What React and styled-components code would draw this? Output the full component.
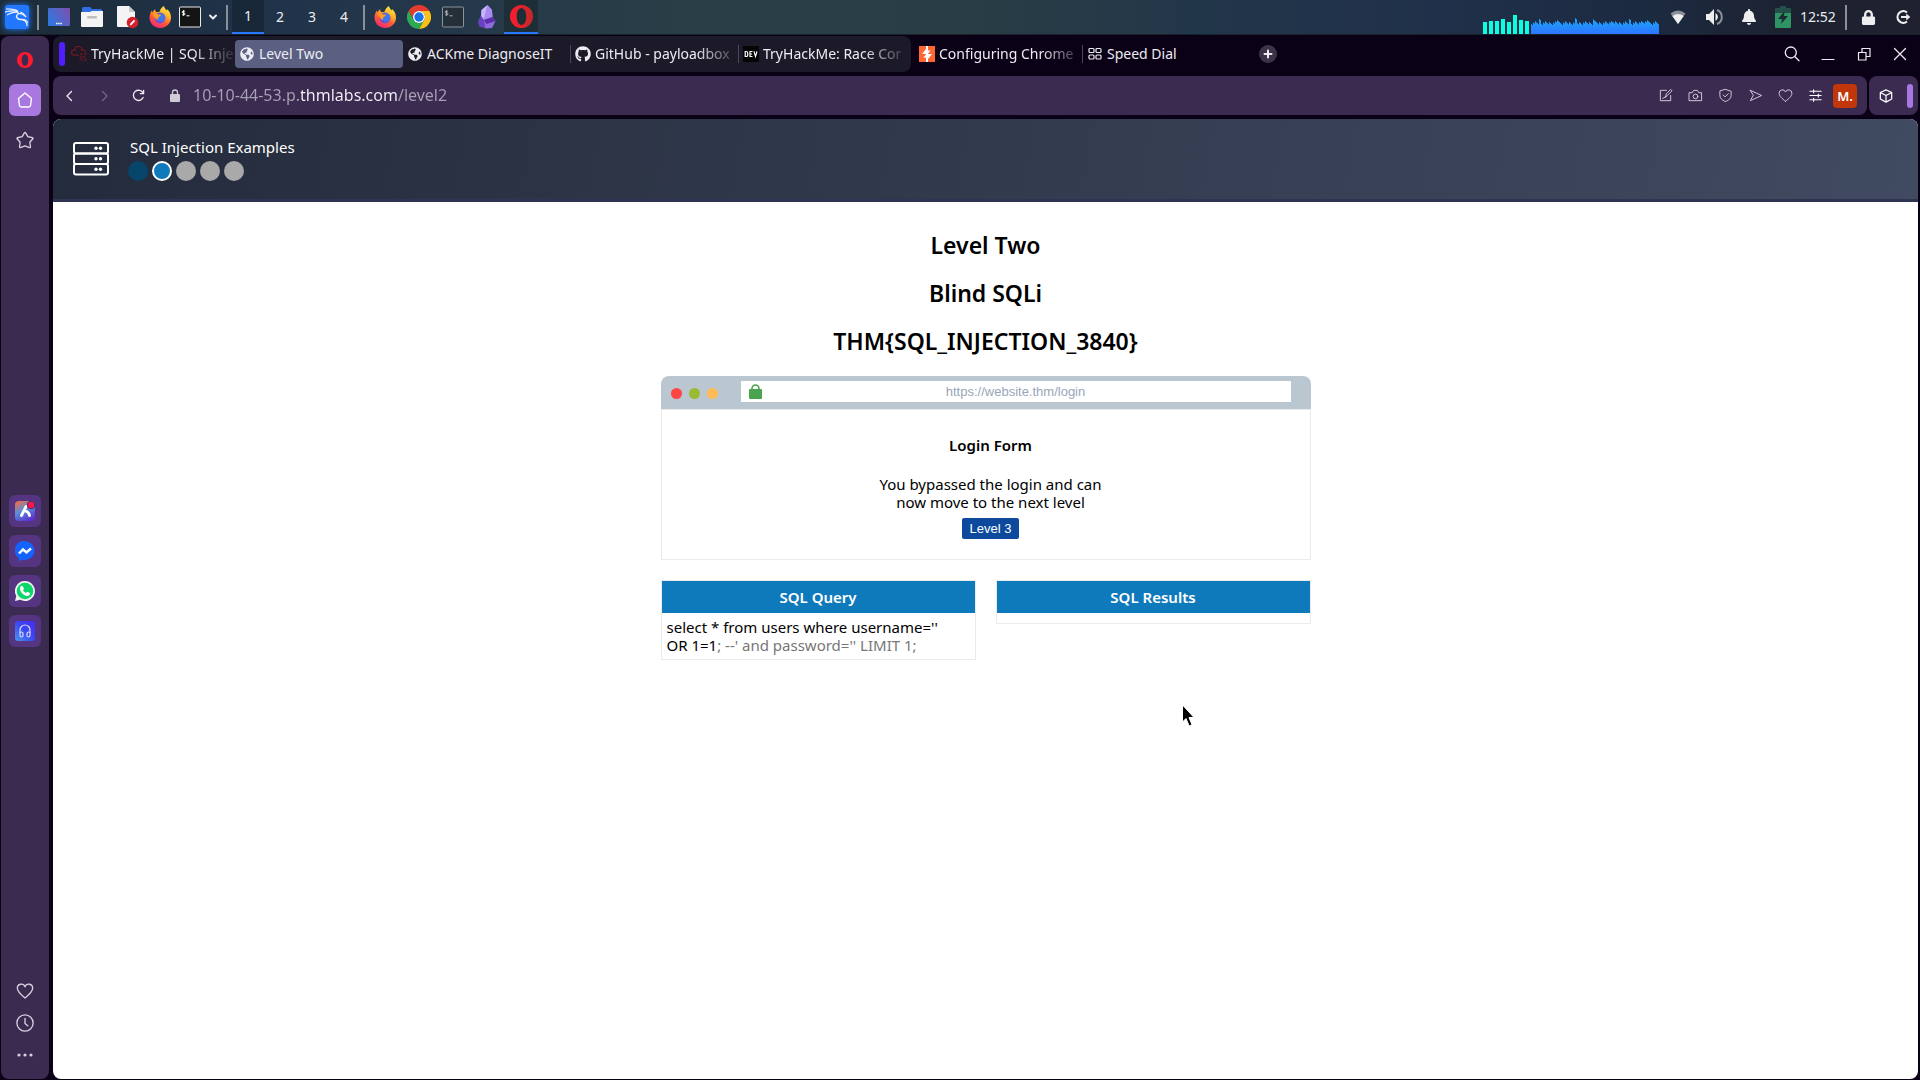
import React from "react";
import styled, { createGlobalStyle } from "styled-components";
import { SiKalilinux, SiTryhackme, SiMessenger } from "react-icons/si";
import { FaGithub, FaGlobeAmericas, FaLock, FaBell } from "react-icons/fa";

const GlobalStyle = createGlobalStyle`
  *, *::before, *::after { box-sizing: border-box; }
  body { margin: 0; background: #0b0116; font-family: "Noto Sans", sans-serif; }
  button, input { font: inherit; color: inherit; border: 0; padding: 0; background: none; }
  svg { display: block; flex: none; }
  h1, h2, h3, p { margin: 0; }
`;

const Desktop = styled.div`
  min-height: 100vh;
  display: flex;
  flex-direction: column;
`;

/* ---------- desktop panel ---------- */

const Panel = styled.header`
  height: 35px;
  flex: none;
  display: flex;
  align-items: center;
  justify-content: space-between;
  padding: 0 0 0 2px;
  border-bottom: 1px solid #182329;
  background: linear-gradient(90deg, #1c2c38 0%, #20324a 13%, #25394a 25%, #2a3f45 38%, #293d45 50%, #22364a 63%, #20304a 75%, #1c2a40 86%, #1d2130 94%, #1f2130 100%);
  font-size: 14px;
  line-height: 20px;
  color: #e8eaee;
`;

const PanelGroup = styled.div`
  height: 100%;
  display: flex;
  align-items: center;
`;

const Launcher = styled.button`
  width: ${(p) => p.$width || 27}px;
  height: 34px;
  display: flex;
  align-items: center;
  justify-content: center;
  color: #eeeeee;
  background: ${(p) => (p.$active ? "#1d2e36" : "none")};
  border-bottom: ${(p) => (p.$active ? "2px solid #2777ff" : "0")};
`;

const KaliTile = styled.span`
  width: 24px;
  height: 24px;
  display: grid;
  place-items: center;
  border-radius: 3px;
  background: #2277ff;
  box-shadow: 0 0 6px #2277ff;
  color: #ffffff;
`;

const Divider = styled.span`
  width: 2px;
  height: 25px;
  margin: 0 ${(p) => p.$gap || 3}px;
  background: #8a9096;
`;

const Workspace = styled(Launcher)`
  background: ${(p) => (p.$active ? "#182838" : "none")};
`;

const Clock = styled.time`
  width: 38px;
  margin-right: 5px;
  text-align: center;
`;

/* ---------- browser frame ---------- */

const Browser = styled.div`
  flex: 1;
  display: flex;
  gap: 4px;
  padding: 1px 2px 1px 1px;
`;

const Sidebar = styled.nav`
  width: 48px;
  flex: none;
  display: flex;
  flex-direction: column;
  justify-content: space-between;
  align-items: center;
  padding: 16px 0 8px;
  border-radius: 8px;
  background: #3b2b50;
  color: #d6d0de;
`;

const SideGroup = styled.div`
  display: flex;
  flex-direction: column;
  align-items: center;
  gap: ${(p) => p.$gap}px;
`;

const AppGroup = styled(SideGroup)`
  padding-top: 10px;
`;

const SideButton = styled.button`
  width: 32px;
  height: ${(p) => p.$height || 32}px;
  display: grid;
  place-items: center;
  border-radius: 6px;
  background: ${(p) => p.$fill || "none"};
`;

const SideLogo = styled(SideButton)`
  margin-bottom: 8px;
`;

const Main = styled.div`
  flex: 1;
  min-width: 0;
  display: flex;
  flex-direction: column;
  gap: 4px;
`;

const TabBar = styled.div`
  height: 36px;
  display: flex;
  align-items: center;
  justify-content: space-between;
  color: #ececf2;
`;

const TabStrip = styled.div`
  display: flex;
  align-items: center;
`;

const TabIsland = styled.div`
  height: 36px;
  display: flex;
  align-items: center;
  padding: 0 4px 0 6px;
  margin-right: 4px;
  border-radius: 8px;
  background: #1c1a29;
`;

const IslandHandle = styled.span`
  width: 6px;
  height: 24px;
  margin-right: 2px;
  border-radius: 3px;
  background: #501eff;
`;

const Tab = styled.button`
  width: 168px;
  height: 28px;
  display: flex;
  align-items: center;
  gap: 4px;
  padding: 0 0 0 4px;
  border-radius: 4px;
  text-align: left;
  font-size: 14px;
  line-height: 20px;
  color: #ececf2;
  background: ${(p) => (p.$active ? "#5b6082" : "none")};
`;

const TabRule = styled.span`
  width: 1px;
  height: 18px;
  margin-left: -1px;
  background: #4a4859;
`;

const TabIcon = styled.span`
  width: 16px;
  height: 16px;
  display: grid;
  place-items: center;
`;

const TabTitle = styled.span`
  flex: 1;
  min-width: 0;
  overflow: hidden;
  white-space: nowrap;
  ${(p) => p.$fade && "mask-image: linear-gradient(90deg, #000 70%, rgba(0, 0, 0, 0.15) 97%);"}
`;

const NewTab = styled.button`
  width: 18px;
  height: 18px;
  margin-left: 8px;
  display: grid;
  place-items: center;
  border-radius: 50%;
  background: #3c3349;
`;

const WindowButtons = styled.div`
  display: flex;
  align-items: center;
`;

const WindowButton = styled.button`
  width: 36px;
  height: 36px;
  display: grid;
  place-items: center;
`;

const AddressRow = styled.div`
  display: flex;
  gap: 2px;
`;

const AddressBar = styled.div`
  flex: 1;
  height: 39px;
  display: flex;
  align-items: center;
  padding: 0 10px 0 0;
  border-radius: 8px;
  background: #3b2b50;
  color: #d6d0de;
`;

const NavButton = styled.button`
  width: 34px;
  height: 32px;
  display: grid;
  place-items: center;
`;

const UrlField = styled.label`
  flex: 1;
  display: flex;
  align-items: center;
  gap: 13px;
  margin-left: 15px;
`;

const UrlInput = styled.input`
  flex: 1;
  height: 26px;
  padding-bottom: 2px;
  font-size: 16px;
  line-height: 24px;
  outline: 0;
  color: transparent;
  background: linear-gradient(90deg, #a9a1b6 108px, #f4f2f7 108px, #f4f2f7 205px, #a9a1b6 205px);
  background-clip: text;
`;

const Tool = styled.button`
  width: 30px;
  height: 32px;
  display: grid;
  place-items: center;
`;

const Profile = styled.button`
  width: 24px;
  height: 24px;
  margin-left: 3px;
  border-radius: 4px;
  background: #c2360c;
  color: #ffffff;
  font-size: 13px;
  font-weight: 600;
  line-height: 24px;
`;

const SidePill = styled.div`
  width: 49px;
  height: 39px;
  display: flex;
  align-items: center;
  justify-content: space-between;
  padding: 0 5px 0 2px;
  border-radius: 8px;
  background: #3b2b50;
  color: #ffffff;
`;

const PillHandle = styled.span`
  width: 6px;
  height: 24px;
  border-radius: 3px;
  background: #a877e0;
`;

/* ---------- web page ---------- */

const Page = styled.div`
  flex: 1;
  overflow: hidden;
  border-radius: 8px;
  background: #ffffff;
  color: #000000;
`;

const PageHeader = styled.header`
  height: 83px;
  display: flex;
  align-items: center;
  gap: 19px;
  padding: 0 20px;
  border-bottom: 3px solid #2f3453;
  background: linear-gradient(100deg, #242b3c, #404a60);
  color: #ffffff;
`;

const PageTitle = styled.h1`
  padding-left: 2px;
  margin-bottom: 4px;
  font-size: 15px;
  font-weight: 400;
  line-height: 20px;
`;

const Steps = styled.div`
  display: flex;
  gap: 4px;
`;

const Step = styled.a`
  width: 20px;
  height: 20px;
  border-radius: 50%;
  border: ${(p) => (p.$state === "current" ? "2px solid #ffffff" : "0")};
  background: ${(p) => ({ done: "#07456a", current: "#0f7abb", next: "#a9a9a9" })[p.$state]};
`;

const Content = styled.main`
  max-width: 650px;
  margin: 0 auto;
  padding-top: 29px;
  font-size: 15px;
  line-height: 18px;
`;

const Heading = styled.h2`
  margin-bottom: 20px;
  text-align: center;
  font-size: 23px;
  font-weight: 600;
  line-height: 28px;
`;

const MockBar = styled.div`
  height: 33px;
  display: flex;
  align-items: center;
  margin-top: 21px;
  padding: 0 20px 0 10px;
  border-radius: 8px 8px 0 0;
  background: #bbc7d0;
`;

const Lights = styled.div`
  flex: none;
  width: 70px;
  display: flex;
  gap: 7px;
  padding-top: 2px;
`;

const Light = styled.span`
  width: 11px;
  height: 11px;
  border-radius: 50%;
  background: ${(p) => p.$color};
`;

const MockUrl = styled.label`
  flex: 1;
  height: 21px;
  display: flex;
  align-items: center;
  padding: 0 21px 0 8px;
  margin-bottom: 2px;
  background: #ffffff;
`;

const MockInput = styled.input`
  flex: 1;
  text-align: center;
  outline: 0;
  font-family: "Liberation Sans", sans-serif;
  font-size: 13px;
  line-height: 20px;
  color: #98a6ba;
`;

const MockBody = styled.section`
  display: flex;
  flex-direction: column;
  align-items: center;
  padding: 26px 0 20px 10px;
  margin-bottom: 20px;
  border: 1px solid #ebebeb;
  text-align: center;
`;

const FormTitle = styled.h3`
  margin-bottom: 21px;
  font-size: 15px;
  font-weight: 600;
`;

const NextButton = styled.button`
  height: 21px;
  padding: 0 8px;
  margin-top: 7px;
  border-radius: 2px;
  background: #0d4a9e;
  color: #ffffff;
  font-family: "Liberation Sans", sans-serif;
  font-size: 13px;
  line-height: 20px;
`;

const Panels = styled.div`
  display: grid;
  grid-template-columns: 1fr 1fr;
  align-items: start;
  gap: 20px;
`;

const SqlPanel = styled.section`
  border: 1px solid #ebebeb;
`;

const SqlTitle = styled.h3`
  background: #0f7abb;
  color: #ffffff;
  text-align: center;
  font-size: 15px;
  font-weight: 600;
  line-height: 32px;
`;

const SqlBody = styled.p`
  padding: 5px;
`;

const Muted = styled.span`
  color: #777777;
`;

const Pointer = styled.div`
  position: absolute;
  left: 1181px;
  top: 704px;
  pointer-events: none;
`;

/* ---------- drawings ---------- */

const Line = ({ size = 16, w = 1, children, box = 16, ...rest }) => (
  <svg width={size} height={size} viewBox={`0 0 ${box} ${box}`} fill="none" stroke="currentColor" strokeWidth={w} strokeLinecap="round" strokeLinejoin="round" {...rest}>
    {children}
  </svg>
);

const Firefox = ({ id }) => (
  <svg width="22" height="22" viewBox="0 0 22 22">
    <defs>
      <linearGradient id={id} x1="0.8" y1="0" x2="0.3" y2="1">
        <stop offset="0" stopColor="#fff04a" />
        <stop offset="0.35" stopColor="#ffb42a" />
        <stop offset="0.65" stopColor="#ff5a35" />
        <stop offset="1" stopColor="#f0267a" />
      </linearGradient>
    </defs>
    <path fill={`url(#${id})`} d="M15 0c.3 2.200 1.500 3 3 4.600.2-.5.100-1 0-1.500C20.600 5.200 22 8.400 22 11.500 22 17.500 17.200 22 11.200 22 5 22 .5 17.400.5 11.600.5 8.700 1.600 6 3 4.600c0 .8.100 1.200.4 1.800C4 5.300 5 4 6.200 3.200c-.1 1 .2 2 .9 2.800h3.200C11.400 3.200 12.800 1 15 0z" />
    <circle cx="11" cy="12" r="5.400" fill="#6a4fd8" />
    <circle cx="12" cy="11.500" r="4.200" fill="#3f78ea" />
    <path fill="#ff9a26" d="M3.500 8c2-1.400 4-1.200 5.200.2 1.400.4 3 .2 3.300.8.1 1.400-2 1.500-2.600 2.300-.6.900-.1 2.200-.8 2.800C6 13 5 10 3.500 8z" />
  </svg>
);

const Chrome = () => (
  <svg width="24" height="24" viewBox="0 0 24 24">
    <path fill="#e33b2e" d="M1.600 6A12 12 0 0 1 22.400 6H12a6 6 0 0 0-5.200 9z" />
    <path fill="#fbc116" d="M22.400 6A12 12 0 0 1 12 24l5.200-9a6 6 0 0 0 0-6 6 6 0 0 0-5.200-3z" />
    <path fill="#2da94f" d="M12 24A12 12 0 0 1 1.600 6l5.200 9A6 6 0 0 0 17.200 15z" />
    <circle cx="12" cy="12" r="6" fill="#ffffff" />
    <circle cx="12" cy="12" r="4.700" fill="#1a73e8" />
  </svg>
);

const Terminal = ({ dim }) => (
  <svg width="22" height="22" viewBox="0 0 22 22">
    <rect x="0.500" y="1" width="21" height="20" rx="1" fill={dim ? "#23303a" : "#141414"} stroke={dim ? "#8a9399" : "#e8e8e8"} />
    <g fill="none" stroke={dim ? "#a8b0b5" : "#ffffff"} strokeWidth="1">
      <path d="M5.800 5.200H4.200q-1 0-1 .9t1 .9h.8q1 0 1 .9t-1 .9H3.200M4.600 4.200v5.600M7.500 9.800h3" />
    </g>
  </svg>
);

const DesktopIcon = () => (
  <svg width="22" height="18" viewBox="0 0 22 18">
    <defs>
      <linearGradient id="desk" x1="0" y1="0.500" x2="1" y2="0">
        <stop offset="0" stopColor="#3574dc" />
        <stop offset="1" stopColor="#7f4fac" />
      </linearGradient>
    </defs>
    <rect width="22" height="18" rx="1" fill="url(#desk)" />
    <path d="M8 15.500h6" stroke="#ffffff" strokeWidth="1.500" strokeDasharray="1.500 .7" />
  </svg>
);

const FolderIcon = () => (
  <svg width="22" height="20" viewBox="0 0 22 20">
    <path fill="#2f6fe0" d="M1 1.500Q1 0 2.500 0H9l2 2h9q1 0 1 1v4H1z" />
    <path fill="#f4f4f4" d="M0 5h9l2-1h11v15q0 1-1 1H1q-1 0-1-1z" />
    <rect x="6" y="9" width="10" height="2.500" rx="1.200" fill="#bdbdbd" />
  </svg>
);

const DocIcon = () => (
  <svg width="22" height="23" viewBox="0 0 22 23">
    <path fill="#f4f4f4" d="M1 0h11l6 6v15H1q-1 0-1-1V1q0-1 1-1z" />
    <path fill="#c8c8c8" d="M12 0l6 6h-6z" />
    <circle cx="15.500" cy="16.500" r="5.800" fill="#d3202a" />
    <path d="M13.300 18.800l4.300-4.500" stroke="#ffffff" strokeWidth="1.800" />
  </svg>
);

const Obsidian = () => (
  <svg width="18" height="24" viewBox="0 0 18 24">
    <path fill="#8f6be0" d="M9.500 0L14 5l.5 7 3 4-3.500 7-6 .5L1 21l-.5-5L3 11l.5-6z" />
    <path fill="#c9b3ff" d="M9.500 0L3.500 5 3 11l3 4z" />
    <path fill="#a98af0" d="M9.500 0L14 5l.5 7L6 15z" />
    <path fill="#6a3fc0" d="M3 11l3 4 1.500 8L1 21l-.5-5z" />
    <path fill="#5a2fa8" d="M6 15l8.500-3 3 4-9 3z" />
  </svg>
);

const OperaO = ({ size, shaded }) => (
  <svg width={size} height={size} viewBox="0 0 24 24">
    <defs>
      <linearGradient id={`opera${size}`} x1="0" x2="1">
        <stop offset="0" stopColor="#ff1b2d" />
        <stop offset="1" stopColor={shaded ? "#c22a2a" : "#ff1b2d"} />
      </linearGradient>
    </defs>
    <path fillRule="evenodd" fill={`url(#opera${size})`} d="M12 0a12 12 0 1 0 0 24 12 12 0 0 0 0-24zm0 3.200c3 0 5 3.800 5 8.800s-2 8.800-5 8.800S7 17 7 12s2-8.800 5-8.800z" />
  </svg>
);

const BARS = [12, 13, 13, 15, 12, 19, 14, 13];
const LOAD = Array.from({ length: 64 }, (_, i) => 10 + ((i * 7) % 5) * 0.700 + (i % 9 === 4 ? 3 : 0) + (i === 55 ? 3 : 0));

const LoadMeter = () => (
  <svg width="176" height="34" viewBox="0 0 176 34">
    <defs>
      <linearGradient id="load" x1="0" y1="0" x2="0" y2="1">
        <stop offset="0" stopColor="#18a8fa" />
        <stop offset="1" stopColor="#2f74ff" />
      </linearGradient>
    </defs>
    {BARS.map((h, i) => (
      <rect key={i} x={i * 6} y={34 - h} width="4" height={h} fill="#0affe0" />
    ))}
    <path fill="url(#load)" d={`M48 34${LOAD.map((h) => `V${34 - h}h1V${35 - h}h1`).join("")}V34z`} />
  </svg>
);

const ServerIcon = () => (
  <svg width="36" height="34" viewBox="0 0 36 34" fill="none" stroke="#ffffff" strokeWidth="2">
    {[1, 11.500, 22].map((y) => (
      <g key={y}>
        <rect x="1" y={y} width="34" height="10.500" rx="2" />
        <circle cx="23" cy={y + 5.200} r="1.700" fill="#ffffff" stroke="none" />
        <circle cx="27.500" cy={y + 5.200} r="1.700" fill="#ffffff" stroke="none" />
      </g>
    ))}
  </svg>
);

const GridIcon = () => (
  <Line size={14} box={14} w={1.200}>
    <rect x="1" y="1.500" width="5" height="4" rx="1" />
    <rect x="8" y="1.500" width="5" height="4" rx="1" />
    <rect x="1" y="8" width="5" height="4" rx="1" />
    <rect x="8" y="8" width="5" height="4" rx="1" />
  </Line>
);

const DevIcon = () => (
  <svg width="16" height="16" viewBox="0 0 16 16">
    <rect width="16" height="16" fill="#050505" />
    <g fill="none" stroke="#ffffff" strokeWidth="1.200">
      <path d="M2.200 5.500v5h1q1.500 0 1.500-1.500V7q0-1.500-1.500-1.500zM9.500 5.500H7v5h2.500M7 8h2M11 5.300l1.500 5 1.500-5" />
    </g>
  </svg>
);

const BurpIcon = () => (
  <svg width="16" height="16" viewBox="0 0 16 16">
    <rect width="16" height="16" fill="#ff6633" />
    <path fill="#ffffff" d="M7 0h2v4.500h2.500L8.800 8H13l-4 5v3H7v-4.500H4.500L7.200 8H3l4-5z" />
  </svg>
);

const HeartPath = () => <path d="M8 14.200C4 11 1.200 8.600 1.200 5.600a3.500 3.500 0 0 1 6.800-1.300 3.500 3.500 0 0 1 6.800 1.300c0 3-2.800 5.400-6.800 8.600z" />;

const WORKSPACES = ["1", "2", "3", "4"];

const ISLAND_TABS = [
  { title: "TryHackMe | SQL Inje", icon: <SiTryhackme size={16} color="#a3141c" />, fade: true },
  { title: "Level Two", icon: <FaGlobeAmericas size={14} />, active: true },
  { title: "ACKme DiagnoseIT", icon: <FaGlobeAmericas size={14} />, rule: true },
  { title: "GitHub - payloadbox", icon: <FaGithub size={16} />, fade: true, rule: true },
  { title: "TryHackMe: Race Cor", icon: <DevIcon />, fade: true },
];

const FREE_TABS = [
  { title: "Configuring Chrome", icon: <BurpIcon />, fade: true, rule: true },
  { title: "Speed Dial", icon: <GridIcon /> },
];

const renderTab = (t) => (
  <React.Fragment key={t.title}>
    <Tab $active={t.active}>
      <TabIcon>{t.icon}</TabIcon>
      <TabTitle $fade={t.fade}>{t.title}</TabTitle>
    </Tab>
    {t.rule && <TabRule />}
  </React.Fragment>
);

const TOOLS = [
  ["Edit", <><path d="M9 2.500H2.500v11h11V8" /><path d="M8 9.500L9 6l4.500-4.500 1.500 1.500-4.500 4.500zM5 11l3-1.500" /></>],
  ["Snapshot", <><path d="M1.500 5h3l1.500-2.500h4L11.500 5h3v8.500h-13z" /><circle cx="8" cy="9" r="2.500" /></>],
  ["Shield", <><path d="M8 1.500l6 2V8c0 3-2.500 5-6 6.500C4.500 13 2 11 2 8V3.500z" /><path d="M5.500 7.500l2 2 3.500-3.500" /></>],
  ["Send", <path d="M2.500 2.500L14.500 8l-12 5.500L5.500 8z" />],
  ["Favourite", <HeartPath />],
  ["Settings", <path stroke="#ffffff" strokeWidth="1.200" d="M2 3.500h12M2 8h12M2 12.500h12M6 2v3M11 6.500v3M6 11v3" />],
];

export default function App() {
  return (
    <Desktop>
      <GlobalStyle />
      <Panel>
        <PanelGroup>
          <Launcher $width={29} aria-label="Applications"><KaliTile><SiKalilinux size={23} stroke="#ffffff" strokeWidth="0.7" /></KaliTile></Launcher>
          <Divider $gap={6} />
          <Launcher $width={27} aria-label="Show desktop"><DesktopIcon /></Launcher>
          <Launcher $width={40} aria-label="Files"><FolderIcon /></Launcher>
          <Launcher $width={32} aria-label="Text editor"><DocIcon /></Launcher>
          <Launcher $width={32} aria-label="Firefox"><Firefox id="fox1" /></Launcher>
          <Launcher $width={28} aria-label="Terminal"><Terminal /></Launcher>
          <Launcher $width={18} aria-label="More terminals"><Line size={12} box={12} w={2}><path d="M3 4.500l3 3 3-3" /></Line></Launcher>
          <Divider $gap={4} />
          {WORKSPACES.map((n) => (
            <Workspace key={n} $width={32} $active={n === "1"}>{n}</Workspace>
          ))}
          <Divider $gap={3} />
          <Launcher $width={34} aria-label="Firefox window"><Firefox id="fox2" /></Launcher>
          <Launcher $width={34} aria-label="Chrome window"><Chrome /></Launcher>
          <Launcher $width={34} aria-label="Terminal window"><Terminal dim /></Launcher>
          <Launcher $width={34} aria-label="Obsidian window"><Obsidian /></Launcher>
          <Launcher $width={34} $active aria-label="Opera window"><OperaO size={23} shaded /></Launcher>
        </PanelGroup>
        <PanelGroup>
          <LoadMeter />
          <Launcher $width={38} aria-label="Network">
            <svg width="16" height="14" viewBox="0 0 16 14">
              <path fill="#8b9098" d="M8 14L0.500 3.500Q8-2.500 15.500 3.500z" />
              <path fill="#eeeeee" d="M8 14L2.300 6Q8 2 13.700 6z" />
            </svg>
          </Launcher>
          <Launcher $width={34} aria-label="Volume">
            <svg width="18" height="18" viewBox="0 0 18 18" fill="none">
              <path fill="#eeeeee" d="M1 6h3l5-5v16l-5-5H1zM10.500 5a4.500 4.500 0 0 1 0 8z" />
              <path stroke="#8b9098" strokeWidth="2" d="M12 2a7.500 7.500 0 0 1 0 14" />
            </svg>
          </Launcher>
          <Launcher $width={36} aria-label="Notifications"><FaBell size={16} /></Launcher>
          <Launcher $width={32} aria-label="Battery">
            <svg width="16" height="22" viewBox="0 0 16 22">
              <path fill="#23514a" d="M5 0h6v2h4q1 0 1 1v5H0V3q0-1 1-1h4z" />
              <path fill="#2f9464" d="M0 7h16v14q0 1-1 1H1q-1 0-1-1z" />
              <path fill="#1d2a38" d="M9.500 5L3 13h4l-1 5 7-8H9z" />
            </svg>
          </Launcher>
          <Clock>12:52</Clock>
          <Divider $gap={3} />
          <Launcher $width={36} aria-label="Lock screen"><FaLock size={15} /></Launcher>
          <Launcher $width={34} aria-label="Log out">
            <svg width="16" height="16" viewBox="0 0 16 16" fill="none" stroke="#eeeeee" strokeWidth="2.200">
              <path d="M12 3.500A5.800 5.800 0 1 0 12 12.500M6 8h7" />
              <path d="M11.500 5l3.500 3-3.500 3z" fill="#eeeeee" strokeWidth="0.500" />
            </svg>
          </Launcher>
        </PanelGroup>
      </Panel>

      <Browser>
        <Sidebar>
          <SideGroup $gap={8}>
            <SideLogo $height={16} aria-label="Opera menu"><OperaO size={16} /></SideLogo>
            <SideButton $fill="#a877e0" aria-label="Home">
              <Line size={16} w={1.400} stroke="#ffffff"><path d="M8 1L14.500 6.500l-1 7q-.2 1.500-1.700 1.500H4.200q-1.500 0-1.700-1.500l-1-7z" /></Line>
            </SideButton>
            <SideButton aria-label="Bookmarks">
              <Line size={18} w={1.200}><path d="M8 1.200q.4 0 .6.400L10.500 5l4.300 1q.6.300.2.900L12.300 10l.6 4.200q-.1.700-.8.500L8 13.200l-4.100 1.500q-.7.200-.8-.5l.6-4.200L1 6.900q-.4-.6.200-.9l4.300-1 1.900-3.400q.2-.4.6-.4z" /></Line>
            </SideButton>
          </SideGroup>
          <AppGroup $gap={8}>
            <SideButton $fill="#553581" aria-label="Aria">
              <svg width="22" height="22" viewBox="0 0 22 22">
                <defs>
                  <linearGradient id="aria" x1="0.200" y1="0" x2="0.700" y2="1">
                    <stop offset="0" stopColor="#e8704f" />
                    <stop offset="0.450" stopColor="#5a8fd8" />
                    <stop offset="1" stopColor="#5a2fd0" />
                  </linearGradient>
                </defs>
                <rect x="1" y="1" width="20" height="20" rx="4" fill="url(#aria)" />
                <path d="M7.500 15.500L12 6.500M12.500 11.500q2.500 1 3 4" stroke="#ffffff" strokeWidth="2.800" strokeLinecap="round" fill="none" />
                <circle cx="17" cy="5" r="4" fill="#3b2b50" />
                <circle cx="17" cy="5" r="3.200" fill="#ff1450" />
              </svg>
            </SideButton>
            <SideButton $fill="#553581" aria-label="Messenger">
              <svg width="20" height="20" viewBox="0 0 20 20">
                <path fill="#1463ff" d="M10 0a10 9.500 0 1 1-2.500 18.800L4 20l-.5-3A9.500 9.500 0 0 1 10 0z" />
                <path fill="none" stroke="#ffffff" strokeWidth="2.400" d="M4 12.500l4-4 3.500 3L16 7.500" />
              </svg>
            </SideButton>
            <SideButton $fill="#553581" aria-label="WhatsApp">
              <svg width="20" height="20" viewBox="0 0 20 20">
                <path fill="#f2f2f2" d="M10 0a10 10 0 1 1-4.800 18.800L0 20l1.300-5A10 10 0 0 1 10 0z" />
                <circle cx="10" cy="10" r="8.300" fill="#0bd66a" />
                <path fill="#ffffff" d="M6.500 5h1.200l1.300 2.800-1 1.200c.6 1.300 1.600 2.200 3 2.900l1.200-1.200 2.800 1.300c.2 1.600-1 2.900-2.600 2.900C8.800 14.800 5 11 5 7.400 5 6.200 5.600 5.300 6.500 5z" />
              </svg>
            </SideButton>
            <SideButton $fill="#553581" aria-label="Player">
              <svg width="20" height="20" viewBox="0 0 20 20">
                <defs>
                  <linearGradient id="player" x1="0" y1="1" x2="1" y2="0">
                    <stop offset="0" stopColor="#4a9af0" />
                    <stop offset="0.500" stopColor="#3a4af0" />
                    <stop offset="1" stopColor="#4a2af0" />
                  </linearGradient>
                </defs>
                <rect width="20" height="20" rx="3" fill="url(#player)" />
                <g fill="none" stroke="#d8d8ff" strokeWidth="1.200">
                  <path d="M5 12V9a5 5 0 0 1 10 0v3" />
                  <rect x="5" y="11" width="3" height="5" rx="1.500" />
                  <rect x="12" y="11" width="3" height="5" rx="1.500" />
                </g>
              </svg>
            </SideButton>
          </AppGroup>
          <SideGroup $gap={0}>
            <SideButton aria-label="Likes"><Line size={18} w={1.200}><HeartPath /></Line></SideButton>
            <SideButton aria-label="History"><Line size={18} w={1.200}><circle cx="8" cy="8" r="7.200" /><path d="M8 4v4.500l2.500 2" /></Line></SideButton>
            <SideButton aria-label="More">
              <svg width="16" height="4" viewBox="0 0 16 4" fill="#d6d0de"><circle cx="2" cy="2" r="1.600" /><circle cx="8" cy="2" r="1.600" /><circle cx="14" cy="2" r="1.600" /></svg>
            </SideButton>
          </SideGroup>
        </Sidebar>

        <Main>
          <TabBar>
            <TabStrip>
              <TabIsland>
                <IslandHandle />
                {ISLAND_TABS.map(renderTab)}
              </TabIsland>
              {FREE_TABS.map(renderTab)}
              <NewTab aria-label="New tab"><Line size={10} box={10} w={2}><path d="M5 1.500v7M1.500 5h7" /></Line></NewTab>
            </TabStrip>
            <WindowButtons>
              <WindowButton aria-label="Search tabs"><Line size={16} w={1.300}><circle cx="6.800" cy="6.500" r="5.500" /><path d="M11 10.800l4 4" /></Line></WindowButton>
              <WindowButton aria-label="Minimize"><Line size={14} box={14} w={1.200}><path d="M1 12.500h12" /></Line></WindowButton>
              <WindowButton aria-label="Restore"><Line size={14} box={14} w={1.200} strokeLinejoin="miter"><path d="M1.500 5.500h7.500v7.500H1.500zM5 5V1.500h8V9.500H9.500" /></Line></WindowButton>
              <WindowButton aria-label="Close"><Line size={14} box={14} w={1.300}><path d="M1.500 1.500l11 11M12.500 1.500l-11 11" /></Line></WindowButton>
            </WindowButtons>
          </TabBar>

          <AddressRow>
            <AddressBar>
              <NavButton aria-label="Back"><Line size={12} box={12} w={1.300} stroke="#f0eef4"><path d="M7.500 1.500L3 6l4.500 4.500" /></Line></NavButton>
              <NavButton aria-label="Forward"><Line size={12} box={12} w={1.200} stroke="#766a88"><path d="M4.500 1.500L9 6l-4.500 4.500" /></Line></NavButton>
              <NavButton aria-label="Reload"><Line size={13} box={14} w={1.400} stroke="#f0eef4"><path d="M12 9.200A5.500 5.500 0 1 1 12 4.500M12.500 1.500v3.500H9" /></Line></NavButton>
              <UrlField>
                <svg width="10" height="14" viewBox="0 0 10 14" fill="none"><rect y="5" width="10" height="8" rx="1" fill="#d0ccd6" /><path d="M2.500 6V3.500a2.500 2.500 0 0 1 5 0V6" stroke="#d0ccd6" strokeWidth="1.300" /></svg>
                <UrlInput aria-label="Address" readOnly value="10-10-44-53.p.thmlabs.com/level2" />
              </UrlField>
              {TOOLS.map(([name, art]) => (
                <Tool key={name} aria-label={name}><Line size={15}>{art}</Line></Tool>
              ))}
              <Profile>M.</Profile>
            </AddressBar>
            <SidePill>
              <Tool aria-label="Workspaces"><Line size={14} w={1.400}><path d="M8 1l6.500 3v7.500L8 15l-6.500-3.500V4zM1.500 4L8 7.500 14.500 4M8 7.500V15" /></Line></Tool>
              <PillHandle />
            </SidePill>
          </AddressRow>

          <Page>
            <PageHeader>
              <ServerIcon />
              <div>
                <PageTitle>SQL Injection Examples</PageTitle>
                <Steps>
                  {["done", "current", "next", "next", "next"].map((s, i) => (
                    <Step key={i} href={`#level${i + 1}`} aria-label={`Level ${i + 1}`} $state={s} />
                  ))}
                </Steps>
              </div>
            </PageHeader>
            <Content>
              <Heading>Level Two</Heading>
              <Heading>Blind SQLi</Heading>
              <Heading>THM{"{"}SQL_INJECTION_3840{"}"}</Heading>
              <MockBar>
                <Lights><Light $color="#ff4444" /><Light $color="#99bb33" /><Light $color="#ffbb55" /></Lights>
                <MockUrl>
                  <svg width="13" height="15" viewBox="0 0 13 15" fill="none"><rect y="5" width="13" height="10" rx="1" fill="#4aa34e" /><path d="M3 6V4.500a3.500 3.500 0 0 1 7 0V6" stroke="#4aa34e" strokeWidth="1.600" /></svg>
                  <MockInput aria-label="Site address" readOnly value="https://website.thm/login" />
                </MockUrl>
              </MockBar>
              <MockBody>
                <FormTitle>Login Form</FormTitle>
                <p>You bypassed the login and can<br />now move to the next level</p>
                <NextButton>Level 3</NextButton>
              </MockBody>
              <Panels>
                <SqlPanel>
                  <SqlTitle>SQL Query</SqlTitle>
                  <SqlBody>select * from users where username=''<br />OR 1=1<Muted>; --' and password='' LIMIT 1;</Muted></SqlBody>
                </SqlPanel>
                <SqlPanel>
                  <SqlTitle>SQL Results</SqlTitle>
                  <SqlBody />
                </SqlPanel>
              </Panels>
            </Content>
          </Page>
        </Main>
      </Browser>
      <Pointer>
        <svg width="14" height="24" viewBox="0 0 14 24"><path fill="#000000" stroke="#ffffff" d="M1.500 1v17l3.500-3.500L8.200 22l2.800-1.300L8 13.500h5z" /></svg>
      </Pointer>
    </Desktop>
  );
}
